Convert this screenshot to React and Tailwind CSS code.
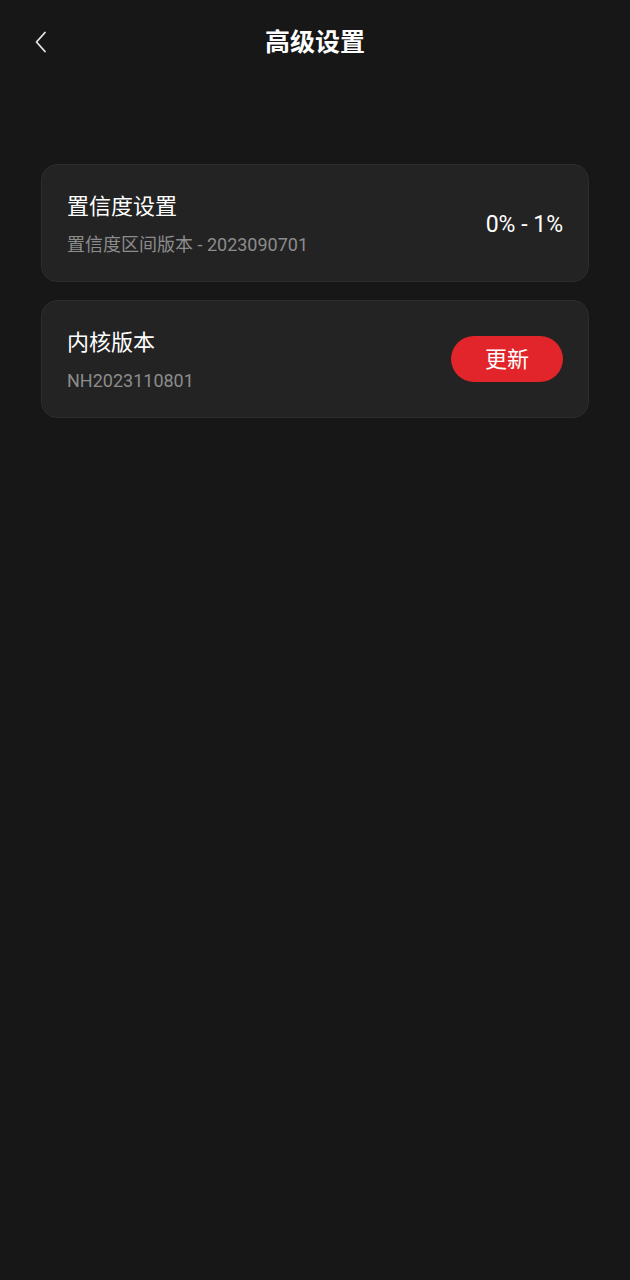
export default function App() {
  const font = { fontFamily: 'Roboto, "Noto Sans CJK SC", sans-serif' }
  return (
    <div className="min-h-[1280px] w-full bg-[#171717] text-white" style={font}>
      <div className="relative flex h-[84px] items-center justify-center pt-[1px]">
        <button type="button" className="absolute left-[29px] top-[30px] flex h-6 w-6 items-center justify-center text-[#e6e6e6]">
          <svg viewBox="0 0 24 24" className="h-6 w-6" fill="none" stroke="currentColor" strokeWidth="1.8" strokeLinecap="round" strokeLinejoin="round">
            <path d="M16 2.5 L7.5 12 L16 21.5" />
          </svg>
        </button>
        <h1 className="text-[25px] font-bold">高级设置</h1>
      </div>

      <div className="mx-[41px] mt-[80px] flex flex-col gap-[18px]">
        <div className="flex h-[118px] items-center justify-between rounded-[16px] border border-[#2d2d2d] bg-[#232323] px-[25px]">
          <div className="flex flex-col pt-[2px]">
            <span className="text-[22px] leading-[30px]">置信度设置</span>
            <span className="mt-[12px] text-[18px] leading-[22px] text-[#8c8c8c]">置信度区间版本 - 2023090701</span>
          </div>
          <span className="pt-[5px] text-[23px]">0% - 1%</span>
        </div>

        <div className="flex h-[118px] items-center justify-between rounded-[16px] border border-[#2d2d2d] bg-[#232323] px-[25px]">
          <div className="flex flex-col pt-[2px]">
            <span className="text-[22px] leading-[30px]">内核版本</span>
            <span className="mt-[12px] text-[18px] leading-[22px] text-[#8c8c8c]">NH2023110801</span>
          </div>
          <button type="button" className="flex h-[46px] w-[112px] items-center justify-center rounded-full bg-[#e1252a] text-[22px] text-white">
            更新
          </button>
        </div>
      </div>
    </div>
  )
}
